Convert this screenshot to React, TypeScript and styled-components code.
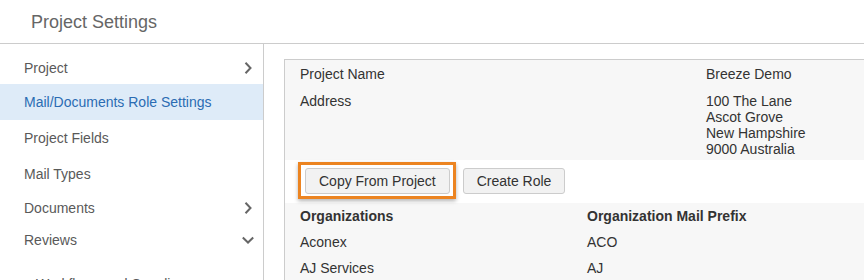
import React, { ReactElement } from "react";
import styled, { createGlobalStyle } from "styled-components";

const GlobalStyle = createGlobalStyle`
  body {
    margin: 0;
    background: #fff;
    font-family: "Liberation Sans", Arial, sans-serif;
    font-size: 14px;
    color: #333;
  }
`;

const Page = styled.div`
  width: 864px;
  height: 280px;
  overflow: hidden;
`;

const Header = styled.header`
  height: 44px;
  border-bottom: 1px solid #ccc;
  display: flex;
  align-items: center;
  padding-left: 31px;
  box-sizing: border-box;
`;

const Title = styled.h1`
  margin: 0;
  font-size: 18px;
  font-weight: normal;
  color: #666;
  line-height: 20px;
`;

const Body = styled.div`
  display: flex;
  height: 236px;
`;

const Sidebar = styled.nav`
  width: 263px;
  flex-shrink: 0;
  border-right: 1px solid #ccc;
  padding-top: 7px;
  overflow: hidden;
`;

const NavItem = styled.div<{ $active?: boolean; $h?: number; $sub?: boolean }>`
  height: ${(p) => p.$h ?? 36}px;
  display: flex;
  align-items: ${(p) => (p.$sub ? "flex-end" : "center")};
  justify-content: space-between;
  padding: 0 9px 0 ${(p) => (p.$sub ? 36 : 24)}px;
  margin-left: -3px;
  box-sizing: border-box;
  color: ${(p) => (p.$active ? "#2b6cb3" : "#595959")};
  background: ${(p) => (p.$active ? "#deebf8" : "transparent")};
  border-left: 3px solid ${(p) => (p.$active ? "#0b6fbf" : "transparent")};
  line-height: 16px;
  white-space: nowrap;
`;

const Chevron = styled.svg`
  width: 12px;
  height: 12px;
  flex-shrink: 0;
`;

const Main = styled.main`
  flex: 1;
  padding: 15px 0 0 20px;
  min-width: 0;
`;

const Panel = styled.section`
  border-left: 1px solid #ccc;
  border-top: 1px solid #ccc;
  height: 100%;
  display: flex;
  flex-direction: column;
`;

const Info = styled.div`
  background: #f7f7f7;
  display: grid;
  grid-template-columns: 406px 1fr;
  row-gap: 11px;
  padding: 6px 15px 3px;
  line-height: 16px;
`;

const Toolbar = styled.div`
  display: flex;
  gap: 13px;
  padding: 8px 0 9px 20px;
  background: #fff;
`;

const ButtonSlot = styled.div`
  position: relative;
`;

const Highlight = styled.div`
  position: absolute;
  top: -6px;
  left: -7px;
  right: -6px;
  bottom: -5px;
  border: 3px solid #ec8421;
  box-shadow: 0 2px 4px rgba(0, 0, 0, 0.3);
  pointer-events: none;
`;

const Button = styled.button`
  height: 26px;
  padding: 0 13px;
  border: 1px solid #ccc;
  border-radius: 3px;
  background: #f2f2f2;
  color: #333;
  font-family: "Liberation Sans", Arial, sans-serif;
  font-size: 14px;
`;

const Table = styled.div`
  flex: 1;
  background: #f7f7f7;
  display: grid;
  grid-template-columns: 287px 1fr;
  grid-auto-rows: 26px;
  align-content: start;
  align-items: center;
  padding-left: 15px;
`;

const Cell = styled.div<{ $head?: boolean }>`
  font-weight: ${(p) => (p.$head ? "bold" : "normal")};
  line-height: 16px;
`;

function ChevronRight(): ReactElement {
  return (
    <Chevron viewBox="0 0 12 12">
      <path d="M3.5 0.8 L8.5 6 L3.5 11.2" fill="none" stroke="#666" strokeWidth="2" />
    </Chevron>
  );
}

function ChevronDown(): ReactElement {
  return (
    <Chevron viewBox="0 0 12 12">
      <path d="M0.8 3.5 L6 8.5 L11.2 3.5" fill="none" stroke="#666" strokeWidth="2" />
    </Chevron>
  );
}

const rows = [
  ["Aconex", "ACO"],
  ["AJ Services", "AJ"],
];

export default function App(): ReactElement {
  return (
    <Page>
      <GlobalStyle />
      <Header>
        <Title>Project Settings</Title>
      </Header>
      <Body>
        <Sidebar>
          <NavItem $h={33}>
            Project
            <ChevronRight />
          </NavItem>
          <NavItem $active>Mail/Documents Role Settings</NavItem>
          <NavItem>Project Fields</NavItem>
          <NavItem>Mail Types</NavItem>
          <NavItem $h={32}>
            Documents
            <ChevronRight />
          </NavItem>
          <NavItem $h={32}>
            Reviews
            <ChevronDown />
          </NavItem>
          <NavItem $sub $h={36}>Workflows and Supplier</NavItem>
        </Sidebar>
        <Main>
          <Panel>
            <Info>
              <div>Project Name</div>
              <div>Breeze Demo</div>
              <div>Address</div>
              <div>
                100 The Lane
                <br />
                Ascot Grove
                <br />
                New Hampshire
                <br />
                9000 Australia
              </div>
            </Info>
            <Toolbar>
              <ButtonSlot>
                <Button>Copy From Project</Button>
                <Highlight />
              </ButtonSlot>
              <Button>Create Role</Button>
            </Toolbar>
            <Table>
              <Cell $head>Organizations</Cell>
              <Cell $head>Organization Mail Prefix</Cell>
              {rows.map(([org, prefix]) => (
                <React.Fragment key={org}>
                  <Cell>{org}</Cell>
                  <Cell>{prefix}</Cell>
                </React.Fragment>
              ))}
            </Table>
          </Panel>
        </Main>
      </Body>
    </Page>
  );
}
